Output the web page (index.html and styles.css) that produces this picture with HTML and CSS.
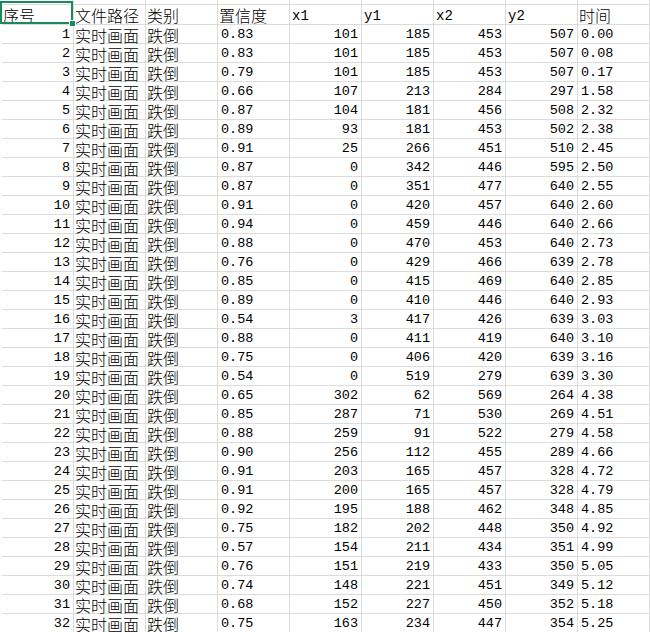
FILE: index.html
```html
<!DOCTYPE html>
<html lang="zh-CN">
<head>
<meta charset="utf-8">
<link rel="stylesheet" href="styles.css">
</head>
<body>
<div class="sheet">
  <div class="grid">
    <div class="c top"></div><div class="c top"></div><div class="c top"></div><div class="c top"></div><div class="c top"></div><div class="c top"></div><div class="c top"></div><div class="c top"></div><div class="c top"></div>
    <div class="c h t">序号</div><div class="c h t">文件路径</div><div class="c h t">类别</div><div class="c h t">置信度</div><div class="c h m">x1</div><div class="c h m">y1</div><div class="c h m">x2</div><div class="c h m">y2</div><div class="c h t">时间</div>

    <div class="c n">1</div><div class="c t">实时画面</div><div class="c t">跌倒</div><div class="c d">0.83</div><div class="c n">101</div><div class="c n">185</div><div class="c n">453</div><div class="c n">507</div><div class="c d">0.00</div>
    <div class="c n">2</div><div class="c t">实时画面</div><div class="c t">跌倒</div><div class="c d">0.83</div><div class="c n">101</div><div class="c n">185</div><div class="c n">453</div><div class="c n">507</div><div class="c d">0.08</div>
    <div class="c n">3</div><div class="c t">实时画面</div><div class="c t">跌倒</div><div class="c d">0.79</div><div class="c n">101</div><div class="c n">185</div><div class="c n">453</div><div class="c n">507</div><div class="c d">0.17</div>
    <div class="c n">4</div><div class="c t">实时画面</div><div class="c t">跌倒</div><div class="c d">0.66</div><div class="c n">107</div><div class="c n">213</div><div class="c n">284</div><div class="c n">297</div><div class="c d">1.58</div>
    <div class="c n">5</div><div class="c t">实时画面</div><div class="c t">跌倒</div><div class="c d">0.87</div><div class="c n">104</div><div class="c n">181</div><div class="c n">456</div><div class="c n">508</div><div class="c d">2.32</div>
    <div class="c n">6</div><div class="c t">实时画面</div><div class="c t">跌倒</div><div class="c d">0.89</div><div class="c n">93</div><div class="c n">181</div><div class="c n">453</div><div class="c n">502</div><div class="c d">2.38</div>
    <div class="c n">7</div><div class="c t">实时画面</div><div class="c t">跌倒</div><div class="c d">0.91</div><div class="c n">25</div><div class="c n">266</div><div class="c n">451</div><div class="c n">510</div><div class="c d">2.45</div>
    <div class="c n">8</div><div class="c t">实时画面</div><div class="c t">跌倒</div><div class="c d">0.87</div><div class="c n">0</div><div class="c n">342</div><div class="c n">446</div><div class="c n">595</div><div class="c d">2.50</div>
    <div class="c n">9</div><div class="c t">实时画面</div><div class="c t">跌倒</div><div class="c d">0.87</div><div class="c n">0</div><div class="c n">351</div><div class="c n">477</div><div class="c n">640</div><div class="c d">2.55</div>
    <div class="c n">10</div><div class="c t">实时画面</div><div class="c t">跌倒</div><div class="c d">0.91</div><div class="c n">0</div><div class="c n">420</div><div class="c n">457</div><div class="c n">640</div><div class="c d">2.60</div>
    <div class="c n">11</div><div class="c t">实时画面</div><div class="c t">跌倒</div><div class="c d">0.94</div><div class="c n">0</div><div class="c n">459</div><div class="c n">446</div><div class="c n">640</div><div class="c d">2.66</div>
    <div class="c n">12</div><div class="c t">实时画面</div><div class="c t">跌倒</div><div class="c d">0.88</div><div class="c n">0</div><div class="c n">470</div><div class="c n">453</div><div class="c n">640</div><div class="c d">2.73</div>
    <div class="c n">13</div><div class="c t">实时画面</div><div class="c t">跌倒</div><div class="c d">0.76</div><div class="c n">0</div><div class="c n">429</div><div class="c n">466</div><div class="c n">639</div><div class="c d">2.78</div>
    <div class="c n">14</div><div class="c t">实时画面</div><div class="c t">跌倒</div><div class="c d">0.85</div><div class="c n">0</div><div class="c n">415</div><div class="c n">469</div><div class="c n">640</div><div class="c d">2.85</div>
    <div class="c n">15</div><div class="c t">实时画面</div><div class="c t">跌倒</div><div class="c d">0.89</div><div class="c n">0</div><div class="c n">410</div><div class="c n">446</div><div class="c n">640</div><div class="c d">2.93</div>
    <div class="c n">16</div><div class="c t">实时画面</div><div class="c t">跌倒</div><div class="c d">0.54</div><div class="c n">3</div><div class="c n">417</div><div class="c n">426</div><div class="c n">639</div><div class="c d">3.03</div>
    <div class="c n">17</div><div class="c t">实时画面</div><div class="c t">跌倒</div><div class="c d">0.88</div><div class="c n">0</div><div class="c n">411</div><div class="c n">419</div><div class="c n">640</div><div class="c d">3.10</div>
    <div class="c n">18</div><div class="c t">实时画面</div><div class="c t">跌倒</div><div class="c d">0.75</div><div class="c n">0</div><div class="c n">406</div><div class="c n">420</div><div class="c n">639</div><div class="c d">3.16</div>
    <div class="c n">19</div><div class="c t">实时画面</div><div class="c t">跌倒</div><div class="c d">0.54</div><div class="c n">0</div><div class="c n">519</div><div class="c n">279</div><div class="c n">639</div><div class="c d">3.30</div>
    <div class="c n">20</div><div class="c t">实时画面</div><div class="c t">跌倒</div><div class="c d">0.65</div><div class="c n">302</div><div class="c n">62</div><div class="c n">569</div><div class="c n">264</div><div class="c d">4.38</div>
    <div class="c n">21</div><div class="c t">实时画面</div><div class="c t">跌倒</div><div class="c d">0.85</div><div class="c n">287</div><div class="c n">71</div><div class="c n">530</div><div class="c n">269</div><div class="c d">4.51</div>
    <div class="c n">22</div><div class="c t">实时画面</div><div class="c t">跌倒</div><div class="c d">0.88</div><div class="c n">259</div><div class="c n">91</div><div class="c n">522</div><div class="c n">279</div><div class="c d">4.58</div>
    <div class="c n">23</div><div class="c t">实时画面</div><div class="c t">跌倒</div><div class="c d">0.90</div><div class="c n">256</div><div class="c n">112</div><div class="c n">455</div><div class="c n">289</div><div class="c d">4.66</div>
    <div class="c n">24</div><div class="c t">实时画面</div><div class="c t">跌倒</div><div class="c d">0.91</div><div class="c n">203</div><div class="c n">165</div><div class="c n">457</div><div class="c n">328</div><div class="c d">4.72</div>
    <div class="c n">25</div><div class="c t">实时画面</div><div class="c t">跌倒</div><div class="c d">0.91</div><div class="c n">200</div><div class="c n">165</div><div class="c n">457</div><div class="c n">328</div><div class="c d">4.79</div>
    <div class="c n">26</div><div class="c t">实时画面</div><div class="c t">跌倒</div><div class="c d">0.92</div><div class="c n">195</div><div class="c n">188</div><div class="c n">462</div><div class="c n">348</div><div class="c d">4.85</div>
    <div class="c n">27</div><div class="c t">实时画面</div><div class="c t">跌倒</div><div class="c d">0.75</div><div class="c n">182</div><div class="c n">202</div><div class="c n">448</div><div class="c n">350</div><div class="c d">4.92</div>
    <div class="c n">28</div><div class="c t">实时画面</div><div class="c t">跌倒</div><div class="c d">0.57</div><div class="c n">154</div><div class="c n">211</div><div class="c n">434</div><div class="c n">351</div><div class="c d">4.99</div>
    <div class="c n">29</div><div class="c t">实时画面</div><div class="c t">跌倒</div><div class="c d">0.76</div><div class="c n">151</div><div class="c n">219</div><div class="c n">433</div><div class="c n">350</div><div class="c d">5.05</div>
    <div class="c n">30</div><div class="c t">实时画面</div><div class="c t">跌倒</div><div class="c d">0.74</div><div class="c n">148</div><div class="c n">221</div><div class="c n">451</div><div class="c n">349</div><div class="c d">5.12</div>
    <div class="c n">31</div><div class="c t">实时画面</div><div class="c t">跌倒</div><div class="c d">0.68</div><div class="c n">152</div><div class="c n">227</div><div class="c n">450</div><div class="c n">352</div><div class="c d">5.18</div>
    <div class="c n">32</div><div class="c t">实时画面</div><div class="c t">跌倒</div><div class="c d">0.75</div><div class="c n">163</div><div class="c n">234</div><div class="c n">447</div><div class="c n">354</div><div class="c d">5.25</div>
  </div>
  <div class="sel"><span class="handle"></span></div>
</div>
</body>
</html>
```
FILE: styles.css
```css
html, body {
  margin: 0;
  padding: 0;
  background: #ffffff;
  overflow: hidden;
}

.sheet {
  position: relative;
  width: 650px;
  height: 632px;
  overflow: hidden;
}

.grid {
  display: grid;
  grid-template-columns: repeat(9, 72px);
  grid-template-rows: 5px 20px;
  grid-auto-rows: 19px;
  margin-left: 2px;
  color: #000;
}

.c {
  box-sizing: border-box;
  border-right: 1px solid #dcdcdc;
  border-bottom: 1px solid #dcdcdc;
  display: flex;
  align-items: center;
  white-space: nowrap;
  overflow: visible;
  height: 19px;
  padding: 0 2px;
  line-height: 1;
}

.top {
  height: 5px;
}

.h {
  height: 20px;
}

.t {
  font-family: "Noto Sans CJK SC", "Noto Sans CJK JP", sans-serif;
  font-weight: 300;
  font-size: 16px;
  padding-left: 1px;
  padding-top: 1px;
}

.m {
  font-family: "Liberation Mono", monospace;
  font-size: 14px;
  padding-left: 2px;
  padding-top: 2px;
}

.n {
  justify-content: flex-end;
  font-family: "Liberation Mono", monospace;
  font-size: 13.5px;
  padding-right: 3px;
  padding-top: 1px;
}

.d {
  font-family: "Liberation Mono", monospace;
  font-size: 13.5px;
  padding-left: 3px;
  padding-top: 1px;
}

.sel {
  position: absolute;
  left: 0;
  top: 1px;
  width: 73px;
  height: 23px;
  box-sizing: border-box;
  border: 2px solid #1a8a5a;
}

.handle {
  position: absolute;
  right: -5px;
  bottom: -5px;
  width: 5px;
  height: 5px;
  background: #1a8a5a;
  border: 1px solid #ffffff;
}
```
